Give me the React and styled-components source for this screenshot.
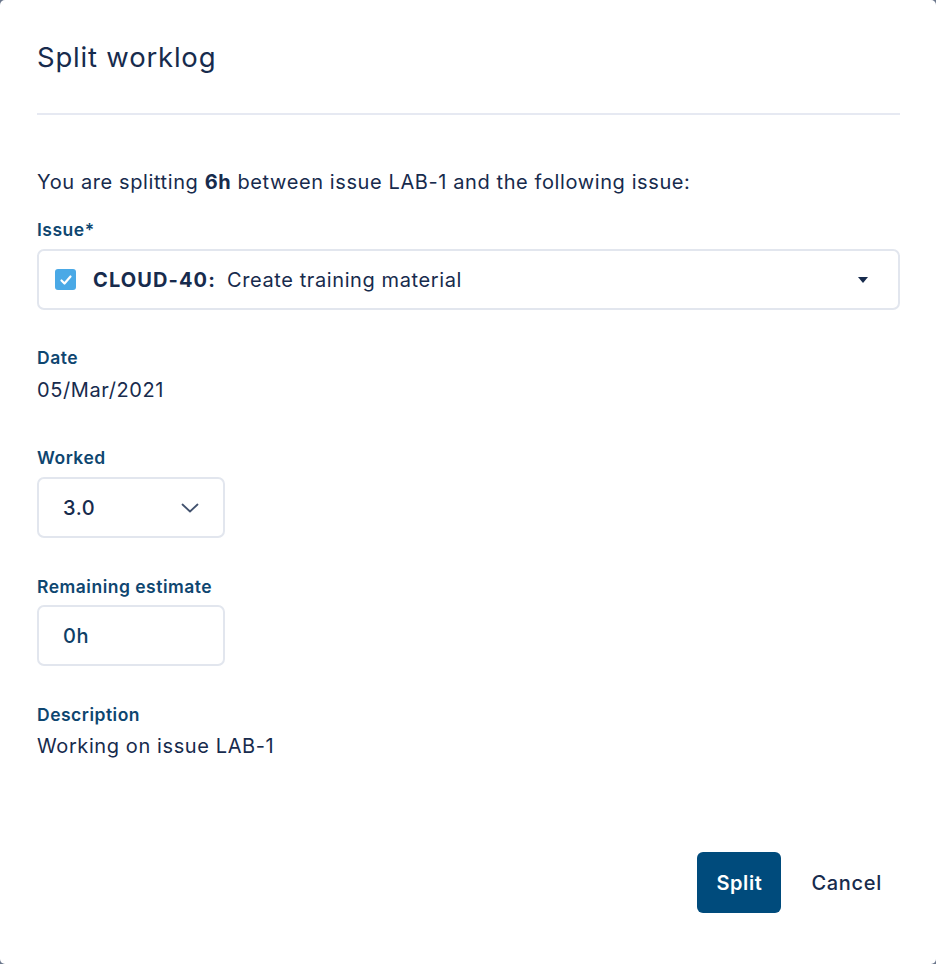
import styled, { createGlobalStyle } from 'styled-components'

const GlobalStyle = createGlobalStyle`
    html, body {
        margin: 0;
        padding: 0;
        background: #6b778c;
    }
    body {
        font-family: Inter, "Noto Sans", "Liberation Sans", sans-serif;
        color: #172b4d;
        letter-spacing: 0.6px;
    }
`

const Dialog = styled.div`
    box-sizing: border-box;
    width: 936px;
    height: 964px;
    background: #ffffff;
    border-radius: 5px;
    display: flex;
    flex-direction: column;
    padding: 41px 36px 51px 37px;
`

const Title = styled.h1`
    margin: 0;
    font-size: 27.5px;
    line-height: 32px;
    font-weight: 400;
    letter-spacing: 0.8px;
    color: #172b4d;
`

const Divider = styled.hr`
    margin: 40px 0 0;
    border: 0;
    height: 2px;
    background: #e6e9f2;
`

const Intro = styled.p`
    margin: 53px 0 0;
    font-size: 20px;
    line-height: 28px;
    color: #172b4d;
    b {
        font-weight: 700;
    }
`

const Field = styled.div`
    display: flex;
    flex-direction: column;
    margin-top: ${props => props.$top}px;
`

const Label = styled.label`
    font-size: 17.5px;
    line-height: 24px;
    font-weight: 600;
    letter-spacing: 0.5px;
    color: #0e4670;
    margin-bottom: ${props => props.$gap || 7}px;
`

const Value = styled.div`
    font-size: 20px;
    line-height: 28px;
    color: #172b4d;
`

const Box = styled.div`
    box-sizing: border-box;
    height: 61px;
    width: ${props => props.$width || '100%'};
    border: 2px solid #e2e6ee;
    border-radius: 7px;
    display: flex;
    align-items: center;
    padding: 0 ${props => props.$padRight || 24}px 0 ${props => props.$padLeft || 24}px;
    font-size: 20px;
    color: ${props => props.$color || '#172b4d'};
    font-weight: ${props => props.$weight || 400};
`

const Check = styled.span`
    width: 21px;
    height: 21px;
    border-radius: 3px;
    background: #4aa9e6;
    display: inline-flex;
    align-items: center;
    justify-content: center;
    margin-right: 17px;
`

const IssueKey = styled.b`
    font-weight: 700;
    letter-spacing: 1.1px;
    margin-right: 11px;
`

const Grow = styled.span`
    flex: 1;
`

const Footer = styled.div`
    margin-top: auto;
    display: flex;
    justify-content: flex-end;
    align-items: center;
    gap: 10px;
`

const PrimaryButton = styled.button`
    height: 61px;
    width: 84px;
    border: 0;
    border-radius: 6px;
    background: #004b7c;
    color: #ffffff;
    font-family: inherit;
    font-size: 20px;
    font-weight: 600;
    letter-spacing: 0.6px;
`

const LinkButton = styled.button`
    height: 61px;
    padding: 0 18px 0 20px;
    border: 0;
    background: transparent;
    color: #172b4d;
    font-family: inherit;
    font-size: 20px;
    font-weight: 500;
    letter-spacing: 0.7px;
`

function App() {
    return (
        <Dialog>
            <GlobalStyle />
            <Title>Split worklog</Title>
            <Divider />
            <Intro>You are splitting <b>6h</b> between issue LAB-1 and the following issue:</Intro>

            <Field $top={22}>
                <Label>Issue*</Label>
                <Box $padLeft={16} $padRight={30}>
                    <Check>
                        <svg width="14" height="14" viewBox="0 0 14 14">
                            <polyline points="2.5,7.5 5.5,10.5 11.5,3.5" fill="none" stroke="#fff" strokeWidth="2.2" strokeLinecap="round" strokeLinejoin="round" />
                        </svg>
                    </Check>
                    <IssueKey>CLOUD-40:</IssueKey>
                    <Grow>Create training material</Grow>
                    <svg width="10" height="6" viewBox="0 0 10 6">
                        <polygon points="0,0 10,0 5,6" fill="#172b4d" />
                    </svg>
                </Box>
            </Field>

            <Field $top={36}>
                <Label $gap={6}>Date</Label>
                <Value>05/Mar/2021</Value>
            </Field>

            <Field $top={42}>
                <Label>Worked</Label>
                <Box $width="188px" $padLeft={24} $padRight={24} $weight={500}>
                    <Grow>3.0</Grow>
                    <svg width="18" height="10" viewBox="0 0 18 10">
                        <polyline points="1.5,1.5 9,8.5 16.5,1.5" fill="none" stroke="#42526e" strokeWidth="1.8" strokeLinecap="round" strokeLinejoin="round" />
                    </svg>
                </Box>
            </Field>

            <Field $top={37}>
                <Label $gap={6}>Remaining estimate</Label>
                <Box $width="188px" $padLeft={24} $color="#0e3e66" $weight={500}>0h</Box>
            </Field>

            <Field $top={37}>
                <Label $gap={5}>Description</Label>
                <Value>Working on issue LAB-1</Value>
            </Field>

            <Footer>
                <PrimaryButton>Split</PrimaryButton>
                <LinkButton>Cancel</LinkButton>
            </Footer>
        </Dialog>
    )
}

export default App
